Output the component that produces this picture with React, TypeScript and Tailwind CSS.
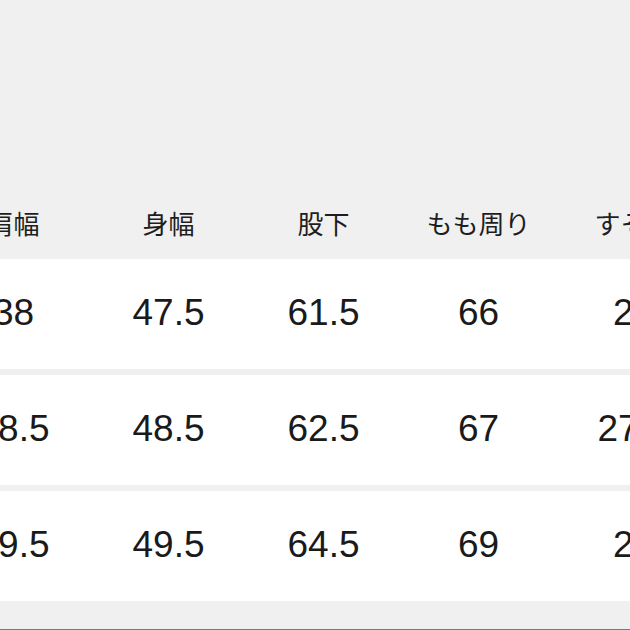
const headers = ["肩幅", "身幅", "股下", "もも周り", "すそ幅"];

const rows = [
  ["38", "47.5", "61.5", "66", "26"],
  ["38.5", "48.5", "62.5", "67", "27.5"],
  ["39.5", "49.5", "64.5", "69", "28"],
];

export default function App() {
  return (
    <div className="flex h-[630px] w-[630px] flex-col overflow-hidden border-b border-[#7a7a7a] bg-[#f0f0f0]">
      <div className="h-[189px] shrink-0" />
      <div className="-ml-[64px] flex h-[70px] shrink-0 items-center pb-[2px]">
        {headers.map((h) => (
          <div
            key={h}
            className="w-[155px] shrink-0 whitespace-nowrap text-center text-[26px] leading-none text-[#1e1e1e]"
            style={{ fontFamily: '"Noto Sans CJK JP", "Noto Sans", sans-serif' }}
          >
            {h}
          </div>
        ))}
      </div>
      <div className="flex flex-col gap-[6px]">
        {rows.map((r, i) => (
          <div key={i} className="-ml-[64px] flex h-[110px] shrink-0 items-center bg-white pb-[3px] pl-[64px]">
            <div className="-ml-[64px] flex">
              {r.map((v, j) => (
                <div
                  key={j}
                  className="w-[155px] shrink-0 whitespace-nowrap text-center text-[37px] leading-none text-[#1a1a1a]"
                  style={{ fontFamily: '"Liberation Sans", Arial, sans-serif' }}
                >
                  {v}
                </div>
              ))}
            </div>
          </div>
        ))}
      </div>
    </div>
  );
}
